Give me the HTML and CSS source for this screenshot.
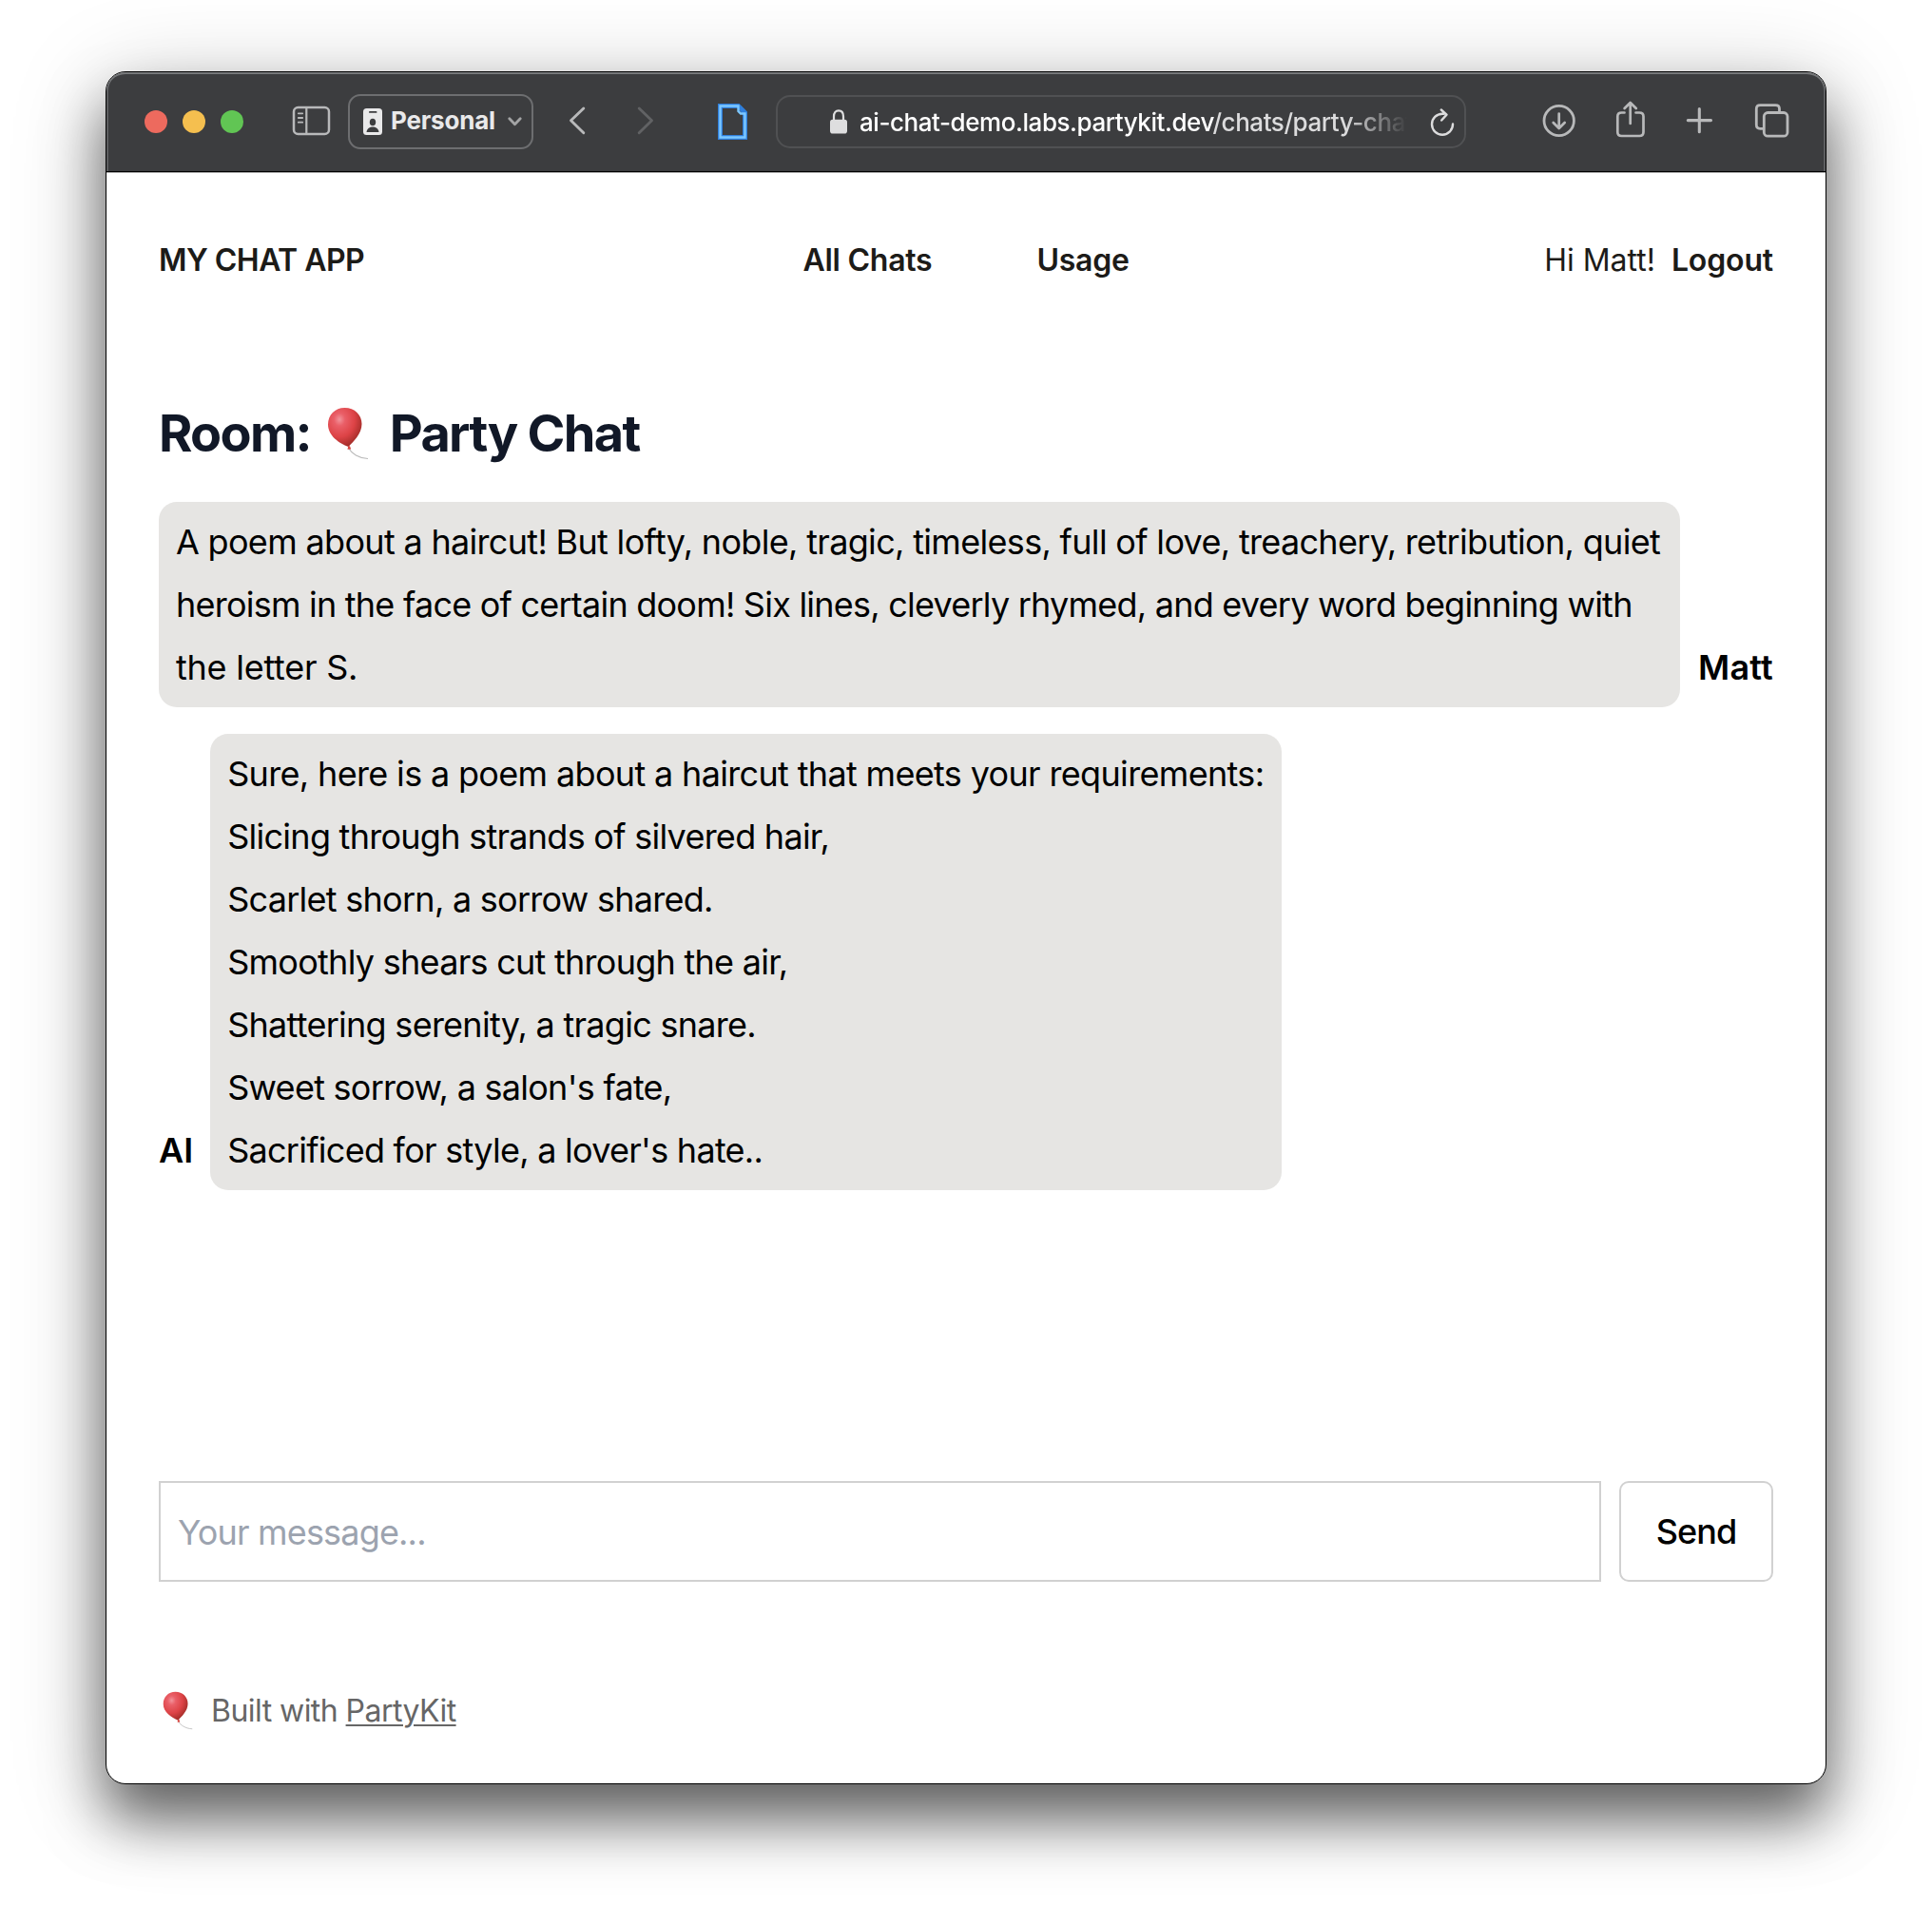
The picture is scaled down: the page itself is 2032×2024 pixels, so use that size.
FILE: index.html
```
<!DOCTYPE html>
<html lang="en">
<head>
<meta charset="utf-8">
<title>Party Chat</title>
<link rel="stylesheet" href="styles.css">
</head>
<body>
<svg width="0" height="0" class="defs" aria-hidden="true">
  <defs>
    <radialGradient id="balloon-fill" cx="0.34" cy="0.3" r="0.75">
      <stop offset="0" stop-color="#f2949b"/>
      <stop offset="0.22" stop-color="#ea5f68"/>
      <stop offset="0.6" stop-color="#dd4346"/>
      <stop offset="1" stop-color="#9c2a25"/>
    </radialGradient>
    <symbol id="balloon" viewBox="0 0 44 56">
      <path d="M23 44C26 49 33 54 43 54.5" fill="none" stroke="#b9b9b9" stroke-width="1.1"/>
      <path d="M18.5 1C8.300 1 1 8.500 1 18.500C1 30.500 13 38.500 22.500 42C27.500 36.500 36.500 28.500 36.500 18C36.500 8.500 29 1 18.500 1Z" fill="url(#balloon-fill)"/>
      <path d="M22.200 41.200L24 41.200L25.200 44.500L21.500 44.800Z" fill="#d8443f"/>
    </symbol>
  </defs>
</svg>
<div class="window">
  <div class="toolbar">
    <div class="lights"><span class="light close"></span><span class="light minimize"></span><span class="light maximize"></span></div>
    <svg class="icon sidebar" width="48" height="56" viewBox="304 100 48 56">
      <rect x="309" y="113" width="37" height="28" rx="4.500" stroke-width="2.500"/>
      <path d="M322.300 113V141" stroke-width="2.200"/>
      <path d="M313.800 119.300H318.200M313.800 124H318.200M313.800 128.700H318.200" stroke-width="1.800"/>
    </svg>
    <div class="profile">
      <svg width="20" height="28" viewBox="0 0 20 28">
        <rect width="20" height="28" rx="3.500" fill="#e9e9ea"/>
        <rect x="6" y="3" width="8.500" height="1.800" rx="0.900" fill="#3c3d3f"/>
        <ellipse cx="10" cy="14.500" rx="3.200" ry="3.800" fill="#3c3d3f"/>
        <path d="M3.500 25C4 21 7 19.500 10 19.500S16 21 16.500 25Z" fill="#3c3d3f"/>
      </svg>
      <span class="profile-name">Personal</span>
      <svg width="15" height="10" viewBox="0 0 15 10"><path d="M1.800 1.800L7.500 7.800L13.200 1.800" fill="none" stroke="#a3a4a5" stroke-width="2.800" stroke-linecap="round" stroke-linejoin="round"/></svg>
    </div>
    <svg class="icon back" width="28" height="56" viewBox="593 100 28 56"><path d="M613.800 114L600.500 126.800L613.800 139.800" stroke-width="2.900"/></svg>
    <svg class="icon forward" width="28" height="56" viewBox="665 100 28 56"><path d="M672.200 114L685.500 126.800L672.200 139.800" stroke-width="2.900"/></svg>
    <svg class="icon page" width="36" height="56" viewBox="753 100 36 56">
      <path class="page-outer" d="M757.500 111.500H776.500L783.500 118.500V144.500H757.500Z"/>
      <path class="page-inner" d="M757.500 111.500H776.500V117L779 119.500H783.500V144.500H757.500Z"/>
    </svg>
    <div class="address">
      <svg width="18" height="26" viewBox="0 0 18 26">
        <path d="M4 12V7.500C4 3.500 6 1.300 9 1.300S14 3.500 14 7.500V12" fill="none" stroke="#dededf" stroke-width="2.200"/>
        <rect x="0" y="10.800" width="18" height="14.700" rx="2.800" fill="#dededf"/>
      </svg>
      <div class="url"><span class="host">ai-chat-demo.labs.partykit.dev</span><span class="path">/chats/party-chat</span></div>
      <svg class="reload" width="28" height="32" viewBox="1503 112 28 32">
        <path d="M1518.500 119.700H1517A11 11 0 1 0 1528 130.500M1515.800 115.500L1521.500 120.600L1516.200 126.500" />
      </svg>
    </div>
    <svg class="icon download" width="40" height="56" viewBox="1620 100 40 56">
      <circle cx="1639.700" cy="127" r="15.700" stroke-width="2.800"/>
      <path d="M1639.700 119.500V134.500M1633.700 129L1639.700 135L1645.700 129" stroke-width="2.700"/>
    </svg>
    <svg class="icon share" width="36" height="56" viewBox="1697 100 36 56">
      <path d="M1708.500 118.500H1705.500Q1701.300 118.500 1701.300 122.500V139Q1701.300 143 1705.500 143H1724.300Q1728.500 143 1728.500 139V122.500Q1728.500 118.500 1724.300 118.500H1720.500M1714.700 130V108.500M1708.600 114L1714.700 108L1720.800 114" stroke-width="2.700"/>
    </svg>
    <svg class="icon plus" width="34" height="56" viewBox="1770 100 34 56"><path d="M1787.300 114.500V138.700M1775.300 126.600H1799.500" stroke-width="3.100"/></svg>
    <svg class="icon tabs" width="42" height="56" viewBox="1843 100 42 56">
      <rect x="1855.300" y="118.500" width="24.700" height="24.700" rx="4" stroke-width="2.800"/>
      <path d="M1854 135.300H1851.300Q1847.300 135.300 1847.300 131.300V114.500Q1847.300 110.700 1851.300 110.700H1867.500Q1871.500 110.700 1871.500 114.500V117" stroke-width="2.800"/>
    </svg>
  </div>

  <div class="content">
    <header class="site-header">
      <div class="brand">MY CHAT APP</div>
      <nav class="links"><a>All Chats</a><a>Usage</a></nav>
      <div class="account"><span>Hi Matt!</span><a>Logout</a></div>
    </header>

    <h1 class="room"><span>Room:</span><svg class="room-icon" width="44" height="56"><use href="#balloon"/></svg><span class="room-name">Party Chat</span></h1>

    <div class="messages">
      <div class="message">
        <div class="bubble prompt">A poem about a haircut! But lofty, noble, tragic, timeless, full of love, treachery, retribution, quiet<br><span class="tight">heroism in the face of certain doom! Six lines, cleverly rhymed, and every word beginning with</span><br><span class="loose">the letter S.</span></div>
        <div class="author">Matt</div>
      </div>
      <div class="message">
        <div class="author">AI</div>
        <div class="bubble reply"><span class="intro">Sure, here is a poem about a haircut that meets your requirements:</span><br>Slicing through strands of silvered hair,<br>Scarlet shorn, a sorrow shared.<br>Smoothly shears cut through the air,<br>Shattering serenity, a tragic snare.<br>Sweet sorrow, a salon's fate,<br>Sacrificed for style, a lover's hate..</div>
      </div>
    </div>

    <form class="composer">
      <input class="field" type="text" placeholder="Your message...">
      <button class="send" type="button">Send</button>
    </form>

    <footer class="site-footer"><svg class="footer-icon" width="32" height="41"><use href="#balloon"/></svg><span class="credit">Built with <a class="kit">PartyKit</a></span></footer>
  </div>
</div>
</body>
</html>
```
FILE: styles.css
```
* { box-sizing: border-box; }

body {
  margin: 0;
  padding: 75px 111px 0;
  height: 2024px;
  overflow: hidden;
  background: #fff;
  color: #000;
  font-family: Inter, "Liberation Sans", sans-serif;
}

.defs { position: absolute; }
svg { display: block; flex: none; }

.window {
  width: 1810px;
  height: 1802px;
  display: flex;
  flex-direction: column;
  border: 1px solid #000;
  border-radius: 21px;
  background: #fff;
  box-shadow: 0 37px 60px rgba(0, 0, 0, .55), 0 16px 100px rgba(0, 0, 0, .22);
}

/* Browser toolbar */
.toolbar {
  height: 105px;
  flex: none;
  display: flex;
  align-items: center;
  padding-left: 40px;
  border-bottom: 1px solid #000;
  border-radius: 20px 20px 0 0;
  background: #3c3d3f;
  box-shadow: inset 0 2px #76787a, inset 2px 0 #5c5d5f, inset -2px 0 #5c5d5f, 0 1px #a5a5a5;
}
.lights { display: flex; gap: 16px; }
.light { width: 24px; height: 24px; border-radius: 50%; }
.close { background: #ed6a5e; }
.minimize { background: #f5bf4f; }
.maximize { background: #61c554; }

.icon { fill: none; stroke: #b8b9ba; stroke-linecap: round; stroke-linejoin: round; }
.sidebar { margin-left: 48px; }
.back { margin-left: 32px; }
.forward { margin-left: 44px; stroke: #616264; }
.page { margin-left: 60px; stroke-linejoin: miter; }
.page-outer { stroke: #2f7fdc; stroke-width: 5; }
.page-inner { stroke: #7cc8ff; stroke-width: 2.4; }
.download { margin-left: 78px; }
.share { margin-left: 37px; }
.plus { margin-left: 37px; }
.tabs { margin-left: 39px; }

.profile {
  width: 195px;
  height: 58px;
  margin-left: 14px;
  padding: 0 10px 0 14px;
  display: flex;
  align-items: center;
  border: 2px solid #6d6e70;
  border-radius: 13px;
}
.profile-name {
  width: 123px;
  margin-left: 9px;
  padding-bottom: 2px;
  font-size: 26px;
  font-weight: 700;
  line-height: 32px;
  letter-spacing: -.2px;
  color: #e9e9ea;
}

.address {
  width: 726px;
  height: 56px;
  margin-left: 27px;
  padding: 0 9px 0 55px;
  display: flex;
  align-items: center;
  border: 2px solid #505153;
  border-radius: 15px;
}
.url {
  width: 577px;
  margin-left: 13px;
  padding-top: 1px;
  overflow: hidden;
  white-space: nowrap;
  font-size: 26px;
  font-weight: 500;
  line-height: 36px;
  letter-spacing: -.44px;
  -webkit-mask-image: linear-gradient(90deg, #000 512px, transparent 576px);
  mask-image: linear-gradient(90deg, #000 512px, transparent 576px);
}
.host { color: #fff; }
.path { color: #dcdcdd; }
.reload { margin-left: 23px; fill: none; stroke: #dcdcdd; stroke-width: 2.4; stroke-linecap: round; stroke-linejoin: round; }

/* Page */
.content { padding: 55px 55px 0; }

.site-header {
  height: 75px;
  display: grid;
  grid-template-columns: 1fr auto 1fr;
  align-items: center;
  font-size: 32px;
  line-height: 40px;
  color: #1c1b18;
}
.brand { font-weight: 600; letter-spacing: -.54px; }
.links { display: flex; gap: 110px; font-weight: 600; letter-spacing: -.25px; }
.account { display: flex; justify-content: flex-end; gap: 17px; }
.account a { font-weight: 600; letter-spacing: -.15px; }

.room {
  margin: 113px 0 40px;
  display: flex;
  align-items: center;
  font-size: 54px;
  font-weight: 700;
  line-height: 64px;
  letter-spacing: -1.7px;
  color: #111827;
}
.room-icon { margin-left: 17px; }
.room-name { margin-left: 22px; }

.messages {
  height: 1030px;
  display: flex;
  flex-direction: column;
  gap: 28px;
  font-size: 36px;
  font-weight: 400;
  line-height: 66px;
  letter-spacing: -.68px;
}
.message { display: flex; align-items: flex-end; justify-content: space-between; }
.message + .message { justify-content: flex-start; gap: 18px; }
.bubble { padding: 9px 18px; border-radius: 19px; background: #e6e5e3; white-space: nowrap; }
.prompt { width: 1600px; }
.reply { width: 1127px; letter-spacing: -.73px; }
.tight { letter-spacing: -.77px; }
.loose { letter-spacing: -.25px; }
.intro { letter-spacing: -.66px; }
.author { padding-bottom: 9px; font-weight: 600; letter-spacing: 0; }
.prompt + .author { letter-spacing: .2px; }

.composer { display: flex; gap: 19px; height: 106px; }
.field {
  flex: 1;
  padding: 2px 18px 0;
  border: 2px solid #d1d1d1;
  border-radius: 0;
  background: #fff;
  font: 400 36px/48px Inter, "Liberation Sans", sans-serif;
  letter-spacing: -.83px;
}
.field::placeholder { color: #9ca3af; opacity: 1; }
.send {
  width: 162px;
  padding: 0;
  border: 2px solid #d1d1d1;
  border-radius: 10px;
  background: #fff;
  color: #000;
  font: 500 36px/48px Inter, "Liberation Sans", sans-serif;
  letter-spacing: -.9px;
}

.site-footer {
  height: 48px;
  margin-top: 111px;
  display: flex;
  align-items: center;
  font-size: 32px;
  line-height: 48px;
  letter-spacing: -.55px;
  color: #666;
}
.footer-icon { margin: 0 19px 0 4px; }
.credit { padding-top: 2px; }
.kit { text-decoration: underline; text-decoration-thickness: 2px; text-underline-offset: 3px; }
```
